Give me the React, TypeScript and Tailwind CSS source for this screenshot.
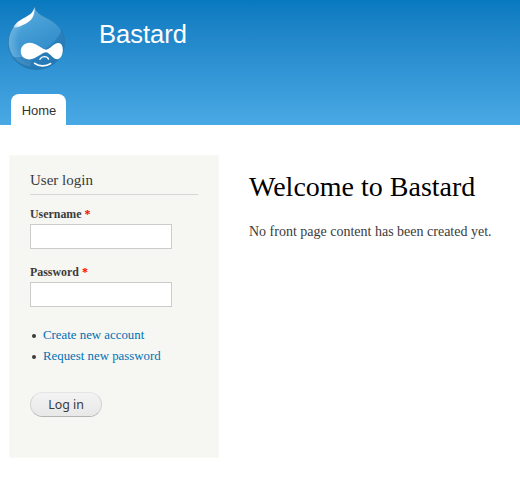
function Logo() {
  return (
    <svg className="block h-[66px] w-[60px]" viewBox="7 5 60 66" fill="none">
      <defs>
        <linearGradient id="drop" x1="20" y1="12" x2="50" y2="70" gradientUnits="userSpaceOnUse">
          <stop offset="0" stopColor="#56aadd" />
          <stop offset="0.5" stopColor="#3b95d0" />
          <stop offset="1" stopColor="#2b83c0" />
        </linearGradient>
        <linearGradient id="shine" x1="32" y1="12" x2="14" y2="28" gradientUnits="userSpaceOnUse">
          <stop offset="0" stopColor="#fff" />
          <stop offset="0.7" stopColor="#fff" />
          <stop offset="1" stopColor="#fff" stopOpacity="0.5" />
        </linearGradient>
        <radialGradient id="edge" cx="38" cy="40" r="29.5" gradientUnits="userSpaceOnUse">
          <stop offset="0.65" stopColor="#8fc6e9" stopOpacity="0" />
          <stop offset="1" stopColor="#8fc6e9" stopOpacity="0.5" />
        </radialGradient>
      </defs>
      <path d="M34.5 6.5C36 12.5 41 15.2 47 18C57 23 64.8 31 64.8 42C64.8 58 52 69.5 36.5 69.5C20 69.5 8.3 57 8.3 42.5C8.3 32 14.5 23 23.5 18.3C29.5 15 33.5 12.5 34.5 6.5Z" fill="url(#drop)" stroke="#2878ab" strokeWidth="0.7" />
      <path d="M9 42.5C9 32 14.5 23 23.5 18.3L42 30L30 66C18 65 9 54 9 42.5Z" fill="url(#edge)" />
      <path d="M61.5 30C57 41 49 48 38 52.5C28 57 19 58 12 56.5C18 65 26 69.2 36.5 69.2C52 69.2 64.4 58 64.4 42C64.4 37 63.5 33.5 61.5 30Z" fill="#1766a2" fillOpacity="0.4" />
      <path d="M34.4 7C35.2 16 31.5 21 25 24C20 26.3 17 28.2 13.6 27.2C15.2 23.2 19.5 20.4 24 18C29.5 15 33.4 13 34.4 7Z" fill="url(#shine)" />
      <path d="M29.5 42.8C36 42.8 42 49.4 46.2 49.7C50 49.3 53.5 43 58.5 43C61.5 43 62.8 46 62.8 50C62.8 55 60.5 59.2 57.2 59.2C53 59.2 50 53 46.4 52.3C42 52.3 36 59.4 29.5 59.4C24 59.4 20.8 56 20.8 51.2C20.8 46.5 24.5 42.8 29.5 42.8Z" fill="#fff" />
      <path d="M39.8 59.3C42 55.8 47 55.8 48.6 59.1" stroke="#fff" strokeWidth="1.3" strokeLinecap="round" />
      <path d="M34.7 63.4C39 66.6 46.5 66.6 50.5 63.6" stroke="#fff" strokeWidth="1.8" strokeLinecap="round" />
    </svg>
  );
}

function Field({ label }: { label: string }) {
  return (
    <label className="block text-[11.9px] font-bold leading-[18px]">
      {label} <span className="text-[#f00]">*</span>
      <input className="mt-px block h-[25px] w-[142px] border border-[#ccc] bg-white px-1 font-normal outline-none" />
    </label>
  );
}

export default function App() {
  return (
    <div className="h-[486px] w-[520px] overflow-hidden bg-white font-['Liberation_Serif',serif] text-[14px] text-[#3b3b3b]">
      <header className="flex h-[125px] flex-col justify-between bg-linear-to-b from-[#0779bf] to-[#48a9e4]">
        <div className="flex pl-[7px] pt-[5px]">
          <Logo />
          <span className="ml-8 mt-[11px] font-['Liberation_Sans',sans-serif] text-[25.5px] leading-9 text-[#fffeff]">Bastard</span>
        </div>
        <nav className="flex pl-[11px]">
          <a className="h-[31px] w-[55px] rounded-t-[8px] bg-white pl-px text-center font-['Liberation_Sans',sans-serif] text-[13px] leading-[33px] text-[#333]">Home</a>
        </nav>
      </header>
      <div className="flex pl-[9px] pt-[30px]">
        <aside className="h-[303px] w-[210px] border border-[#f9f9f5] bg-[#f6f6f2] px-5 pt-[13px]">
          <h2 className="h-[26px] border-b border-[#d6d6d6] text-[15px] leading-[22px]">User login</h2>
          <div className="mt-[10px] flex flex-col gap-[14px]">
            <Field label="Username" />
            <Field label="Password" />
          </div>
          <ul className="mt-[18px] text-[12.85px] leading-[21px] text-[#0071b3]">
            {["Create new account", "Request new password"].map((item) => (
              <li key={item} className="flex items-center">
                <span className="ml-0.5 mr-[7px] size-1 rounded-full bg-[#3b3b3b]" />
                <a>{item}</a>
              </li>
            ))}
          </ul>
          <button className="mt-[25px] block h-[25px] w-[72px] rounded-full border border-[#e4e4e4] border-x-[#d2d2d2] border-b-[#b4b4b4] bg-linear-to-b from-[#f3f3f3] to-[#e8e8e8] font-['Noto_Sans',sans-serif] text-[12.4px] leading-[23px] text-[#3a3a3a]">Log in</button>
        </aside>
        <main className="ml-[30px] pt-[13px]">
          <h1 className="text-[28px] leading-[38px] text-black">Welcome to Bastard</h1>
          <p className="mt-[15px] leading-[21px]">No front page content has been created yet.</p>
        </main>
      </div>
    </div>
  );
}
